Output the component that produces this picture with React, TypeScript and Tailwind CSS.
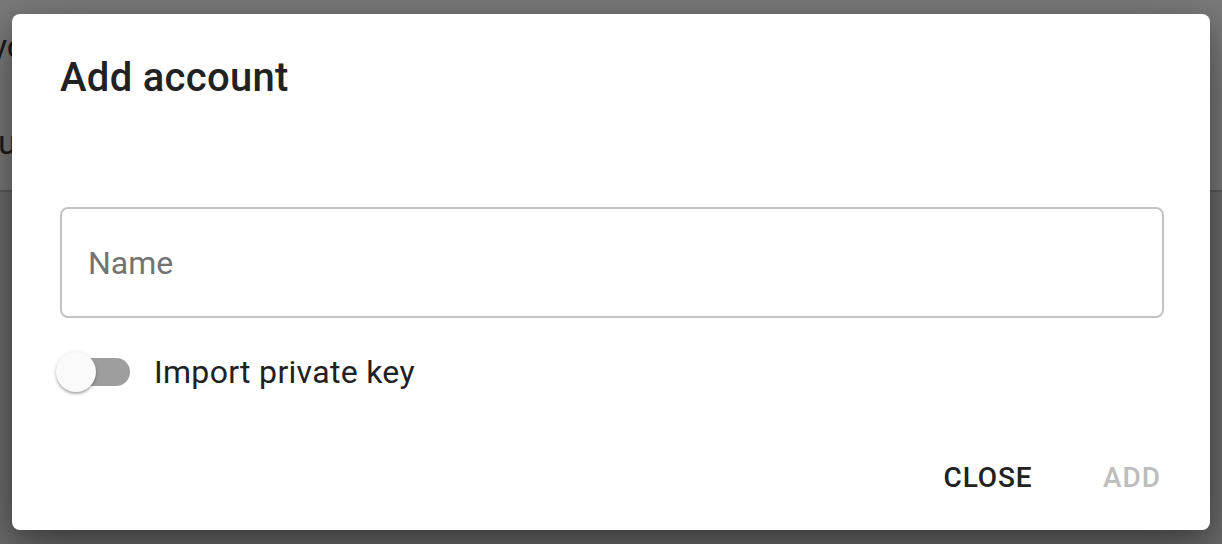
import React from "react";

export default function App() {
  return (
    <div
      className="relative w-[1222px] h-[544px] overflow-hidden bg-[#6c6c6c]"
      style={{ fontFamily: "Roboto, 'Liberation Sans', sans-serif" }}
    >
      {/* page behind the overlay */}
      <div className="flex flex-col">
        <div className="h-[192px] bg-[#7a7a7a] border-b-2 border-[#5c5c5c] flex flex-col">
          <div className="mt-[26px] text-[34px] leading-[40px] text-[#1c1c1c] -ml-[9px]">yo</div>
          <div className="mt-[56px] text-[34px] leading-[40px] text-[#1c1c1c] -ml-[2px]">u</div>
        </div>
      </div>

      {/* dialog layer */}
      <div className="absolute inset-0 flex items-center justify-center">
        <div className="w-[1198px] h-[516px] bg-white rounded-[8px] shadow-[0_20px_60px_rgba(0,0,0,0.35),0_8px_20px_rgba(0,0,0,0.2)] flex flex-col">
          <h2 className="px-12 pt-8 text-[40px] leading-[64px] font-medium text-[#212121] tracking-[0.3px]">
            Add account
          </h2>
          <div className="pl-12 pr-[46px] pt-[97px] flex flex-col flex-1">
            <div className="h-[111px] border-2 border-[#c4c4c4] rounded-[8px] flex items-center px-[26px]">
              <span className="text-[32px] leading-[48px] text-[#737373]">Name</span>
            </div>
            <div className="mt-[16px] flex items-center -ml-[22px]">
              <div className="relative w-[116px] h-[76px]">
                <div className="absolute left-[24px] top-[24px] w-[68px] h-[28px] rounded-full bg-[#9e9e9e]" />
                <div className="absolute left-[18px] top-[18px] w-[40px] h-[40px] rounded-full bg-[#fafafa] shadow-[0_2px_2px_rgba(0,0,0,0.24),0_1px_5px_rgba(0,0,0,0.14)]" />
              </div>
              <span className="text-[32px] leading-[48px] text-[#212121] tracking-[0.3px]">
                Import private key
              </span>
            </div>
          </div>
          <div className="flex justify-end items-center gap-4 pt-4 pb-4 pl-4 pr-[14px]">
            <button className="min-w-[128px] h-[72px] px-4 text-[28px] font-medium tracking-[0.9px] text-[#212121] rounded-[8px]">
              CLOSE
            </button>
            <button className="min-w-[128px] h-[72px] px-4 text-[28px] font-medium tracking-[0.9px] text-[#bdbdbd] rounded-[8px]">
              ADD
            </button>
          </div>
        </div>
      </div>
    </div>
  );
}
